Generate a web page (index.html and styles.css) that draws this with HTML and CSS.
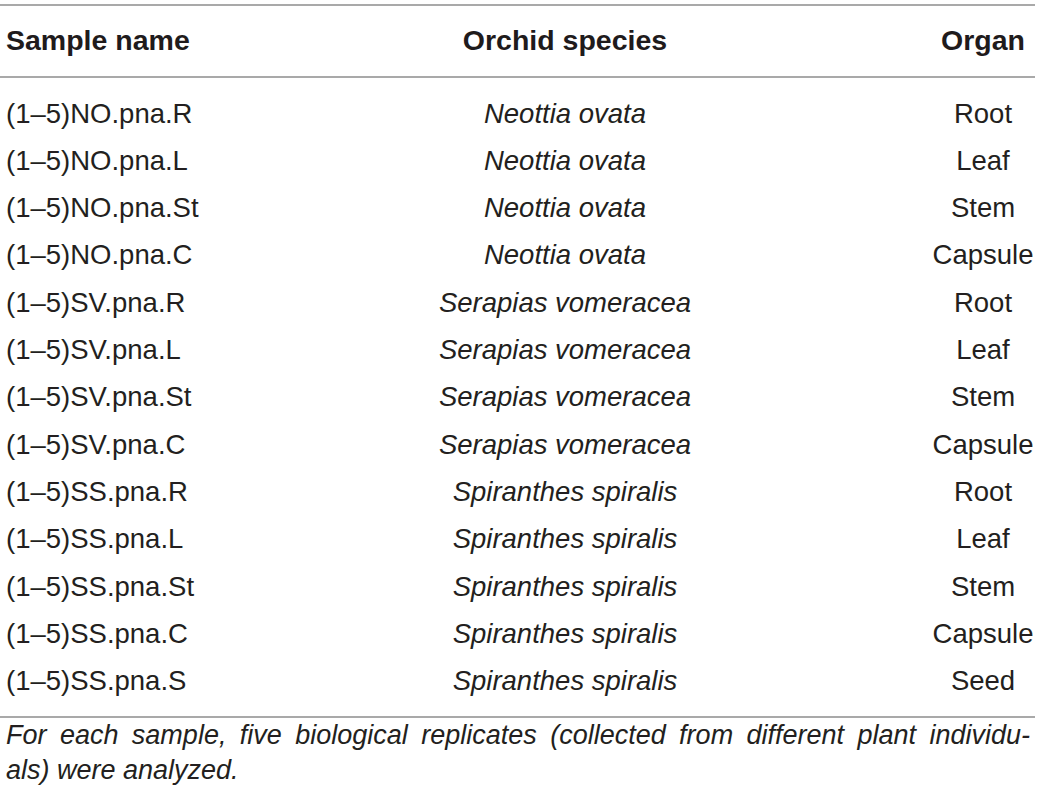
FILE: index.html
```html
<!DOCTYPE html>
<html lang="en">
<head>
<meta charset="utf-8">
<title>Orchid samples</title>
<link rel="stylesheet" href="styles.css">
</head>
<body>
<div class="tbl">
  <div class="head row">
    <div class="c1">Sample name</div>
    <div class="c2">Orchid species</div>
    <div class="c3">Organ</div>
  </div>
  <div class="body">
    <div class="row"><div class="c1">(1–5)NO.pna.R</div><div class="c2 sp">Neottia ovata</div><div class="c3">Root</div></div>
    <div class="row"><div class="c1">(1–5)NO.pna.L</div><div class="c2 sp">Neottia ovata</div><div class="c3">Leaf</div></div>
    <div class="row"><div class="c1">(1–5)NO.pna.St</div><div class="c2 sp">Neottia ovata</div><div class="c3">Stem</div></div>
    <div class="row"><div class="c1">(1–5)NO.pna.C</div><div class="c2 sp">Neottia ovata</div><div class="c3">Capsule</div></div>
    <div class="row"><div class="c1">(1–5)SV.pna.R</div><div class="c2 sp">Serapias vomeracea</div><div class="c3">Root</div></div>
    <div class="row"><div class="c1">(1–5)SV.pna.L</div><div class="c2 sp">Serapias vomeracea</div><div class="c3">Leaf</div></div>
    <div class="row"><div class="c1">(1–5)SV.pna.St</div><div class="c2 sp">Serapias vomeracea</div><div class="c3">Stem</div></div>
    <div class="row"><div class="c1">(1–5)SV.pna.C</div><div class="c2 sp">Serapias vomeracea</div><div class="c3">Capsule</div></div>
    <div class="row"><div class="c1">(1–5)SS.pna.R</div><div class="c2 sp">Spiranthes spiralis</div><div class="c3">Root</div></div>
    <div class="row"><div class="c1">(1–5)SS.pna.L</div><div class="c2 sp">Spiranthes spiralis</div><div class="c3">Leaf</div></div>
    <div class="row"><div class="c1">(1–5)SS.pna.St</div><div class="c2 sp">Spiranthes spiralis</div><div class="c3">Stem</div></div>
    <div class="row"><div class="c1">(1–5)SS.pna.C</div><div class="c2 sp">Spiranthes spiralis</div><div class="c3">Capsule</div></div>
    <div class="row"><div class="c1">(1–5)SS.pna.S</div><div class="c2 sp">Spiranthes spiralis</div><div class="c3">Seed</div></div>
  </div>
  <div class="foot">
    <p class="fl1">For each sample, five biological replicates (collected from different plant individu-</p>
    <p class="fl2">als) were analyzed.</p>
  </div>
</div>
</body>
</html>
```

FILE: styles.css
```css
html, body {
  margin: 0;
  padding: 0;
  background: #ffffff;
}
body {
  font-family: "Liberation Sans", Arial, Helvetica, sans-serif;
  color: #231f20;
}
.tbl {
  width: 1035px;
  padding-top: 4px;
}
.row {
  display: grid;
  grid-template-columns: 199px 732px 104px;
  white-space: nowrap;
}
.c1 {
  padding-left: 6px;
  text-align: left;
}
.c2, .c3 {
  text-align: center;
}
.head {
  border-top: 2px solid #a9a9a9;
  border-bottom: 2px solid #a9a9a9;
  font-weight: bold;
  font-size: 28.5px;
  line-height: 28.5px;
  padding-top: 20px;
  padding-bottom: 21.5px;
  color: #1f1b1c;
}
.body {
  padding-top: 11.5px;
  padding-bottom: 11px;
  border-bottom: 2px solid #a9a9a9;
  font-size: 27.5px;
  line-height: 47.33px;
}
.sp {
  font-style: italic;
}
.foot {
  font-style: italic;
  font-size: 27px;
  line-height: 35px;
  padding: 0 5px 0 6px;
}
.foot p {
  margin: 0;
}
.fl1 {
  text-align: justify;
  text-align-last: justify;
}
```
